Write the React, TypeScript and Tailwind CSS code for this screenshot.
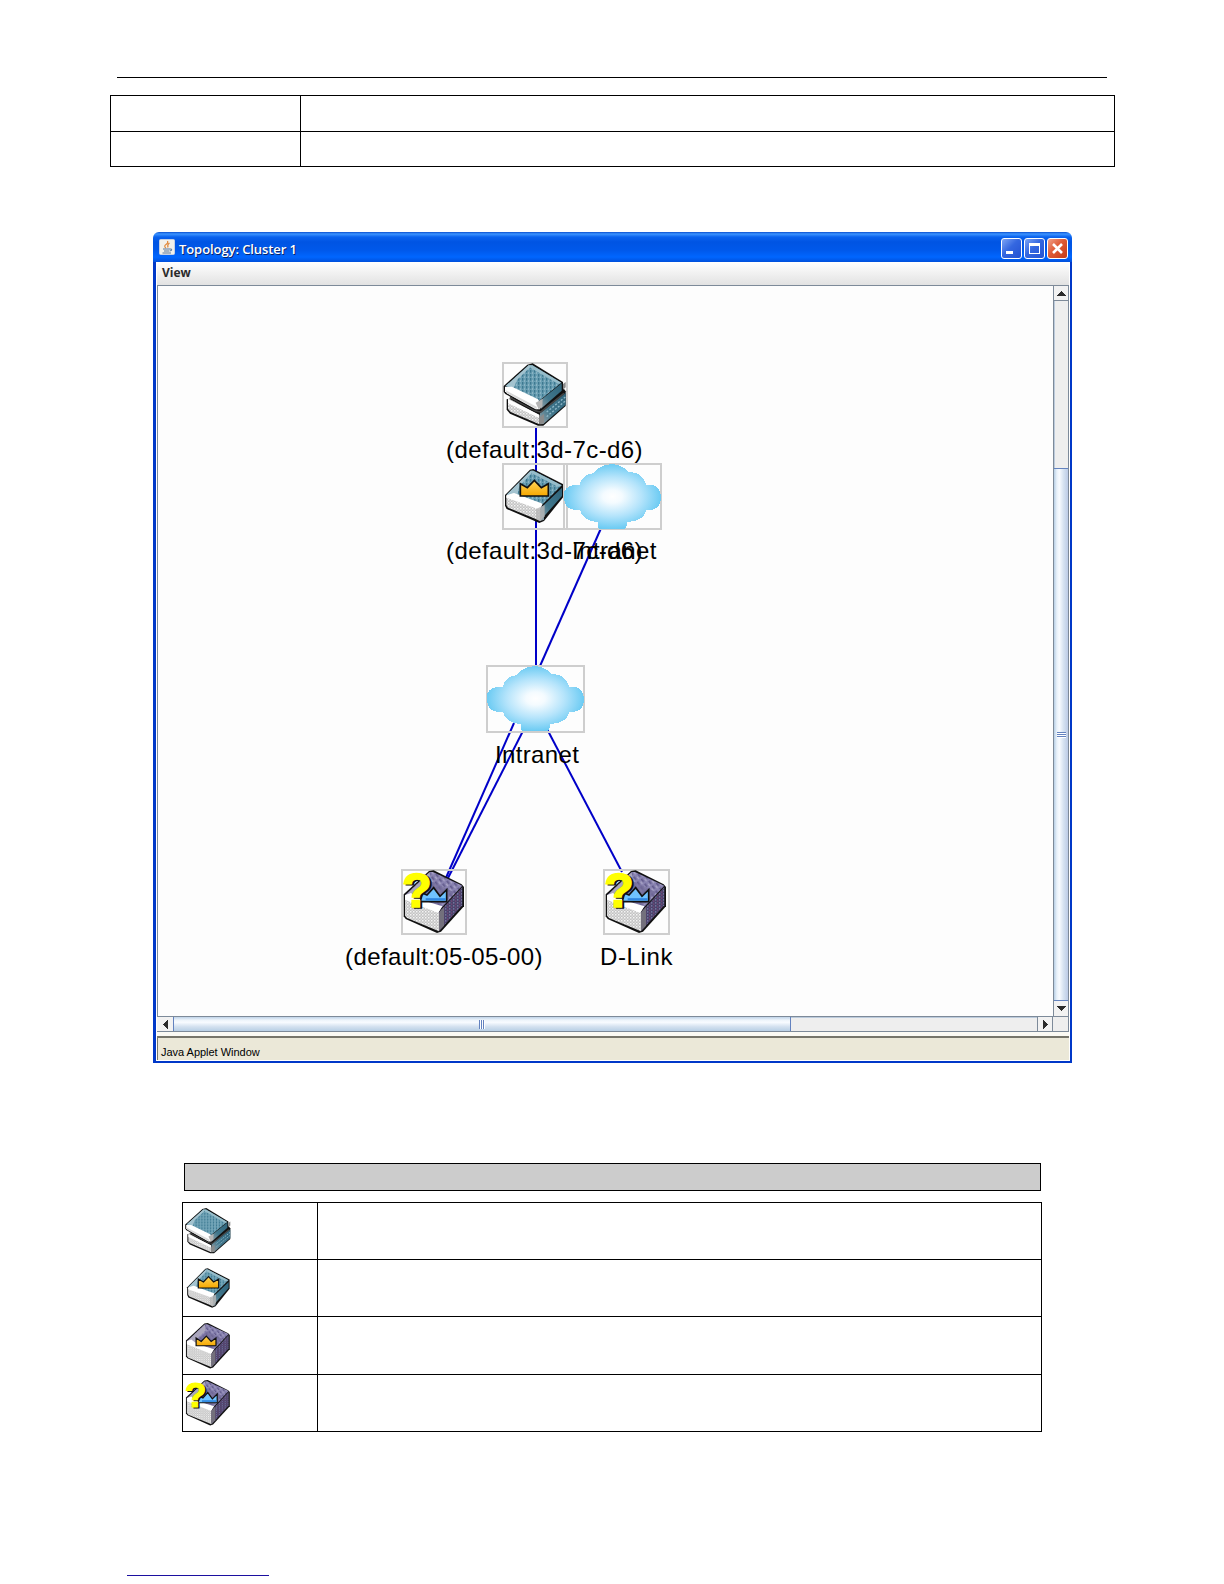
import React from 'react';

const LINKS = [
  [536, 428, 536, 666],
  [602, 526, 540, 666],
  [514, 723, 445, 880],
  [524, 729, 447, 880],
  [547, 729, 622, 872],
];

const LABELS = [
  { text: '(default:3d-7c-d6)', x: 446, y: 436, cls: 'tracking-[0.42px]' },
  { text: '(default:3d-7c-d6)', x: 446, y: 537, cls: 'tracking-[0.42px]' },
  { text: 'Intranet', x: 572, y: 537, cls: 'tracking-[0.45px]' },
  { text: 'Intranet', x: 495, y: 741, cls: 'tracking-[0.35px]' },
  { text: '(default:05-05-00)', x: 345, y: 943, cls: 'tracking-[0.4px]' },
  { text: 'D-Link', x: 600, y: 943, cls: 'tracking-[0.65px]' },
];

// canvas origin inside the page, so nodes can use page coordinates
const OX = 158;
const OY = 286;

function Defs() {
  return (
    <svg width="0" height="0" className="absolute">
      <defs>
        <pattern id="dots" width="9" height="9" patternUnits="userSpaceOnUse">
          <rect width="9" height="9" fill="#c2c2c2" />
          <rect width="4.5" height="4.5" fill="#f4f4f4" />
          <rect x="4.5" y="4.5" width="4.5" height="4.5" fill="#dcdcdc" />
        </pattern>
        <pattern id="tealWeave" width="12" height="12" patternUnits="userSpaceOnUse">
          <rect width="12" height="12" fill="#6a9fb3" />
          <rect width="4" height="8" fill="#3d7890" />
          <rect x="6" y="6" width="3" height="6" fill="#8bb4c4" />
        </pattern>
        <pattern id="purpleWeave" width="15" height="18" patternUnits="userSpaceOnUse" patternTransform="rotate(-35)">
          <rect width="15" height="18" fill="#8882b0" />
          <rect width="5" height="11" fill="#625b8c" />
          <rect x="9" y="6" width="4" height="9" fill="#aaa5c6" />
        </pattern>
        <pattern id="purpleSide" width="12" height="9" patternUnits="userSpaceOnUse">
          <rect width="12" height="9" fill="#48446b" />
          <rect width="4" height="5" fill="#75709d" />
          <rect x="6" y="4" width="4" height="5" fill="#704575" />
        </pattern>
        <linearGradient id="tealSide" x1="0" y1="1" x2="1" y2="0">
          <stop offset="0" stopColor="#9aa3a8" />
          <stop offset="0.4" stopColor="#41778c" />
          <stop offset="1" stopColor="#2e637a" />
        </linearGradient>
        <linearGradient id="gold" x1="0" y1="0" x2="0" y2="1">
          <stop offset="0" stopColor="#ffd45a" />
          <stop offset="1" stopColor="#f5a800" />
        </linearGradient>
        <radialGradient id="cloud" cx="0.5" cy="0.5" r="0.5">
          <stop offset="0" stopColor="#ffffff" />
          <stop offset="0.2" stopColor="#f4fbff" />
          <stop offset="0.6" stopColor="#b5e4fb" />
          <stop offset="1" stopColor="#6ccbf3" />
        </radialGradient>
      </defs>
    </svg>
  );
}

function StackArt() {
  return (
    <g>
      <path d="M14 112V143L24 155L108 191H124L191 132V88L178 70Z" fill="#111" />
      <path d="M18 108L112 160V187L26 150L18 141Z" fill="url(#dots)" />
      <path d="M18 112L112 158V168L18 124Z" fill="#fff" />
      <path d="M114 154L191 92V128L124 186L114 187Z" fill="url(#tealSide)" />
      <path d="M134 150L191 104M134 164L191 116" stroke="#8fb8c8" strokeWidth="4" strokeDasharray="6 5" />
      <path d="M110 168L126 156V184L112 187Z" fill="#8b8b8b" />
      <path d="M24 106L100 146L116 150L186 94" fill="none" stroke="#444" strokeWidth="5" />
      <path d="M5 72L76 8L92 4L183 60V88L170 101L116 146L98 144L10 96L5 90Z" fill="#111" />
      <path d="M11 72L80 10H91L178 62L108 119Z" fill="url(#tealWeave)" />
      <path d="M11 72L80 10L86 14L44 55L36 77Z" fill="#a3c3cf" />
      <path d="M80 10H91L178 62L170 66L86 18Z" fill="#97bdca" />
      <path d="M9 74L30 74L108 112L114 122V142H101L15 94L9 88Z" fill="#fff" />
      <path d="M10 84L104 134V142L15 94Z" fill="#d8d8d8" />
      <path d="M112 118L179 64V86L116 141Z" fill="url(#tealSide)" />
      <path d="M101 122L122 110L121 134L110 142Z" fill="#b5b5b5" />
      <path d="M183 66L191 60V76L183 83Z" fill="#8a8a8a" />
    </g>
  );
}

function SwitchArt() {
  return (
    <g>
      <path d="M9 96L84 20L94 18L184 64V102L126 174L112 180L14 138L9 128Z" fill="#111" />
      <path d="M14 96L86 23H94L179 67L122 124Z" fill="url(#tealWeave)" />
      <path d="M14 95L86 23L90 29L52 70L46 96L30 98Z" fill="#a3c3cf" />
      <path d="M86 23H94L179 67L168 71L90 31Z" fill="#97bdca" />
      <path d="M13 98L32 92L112 128L116 142V174L18 134L13 126Z" fill="url(#dots)" />
      <path d="M13 97L36 90L122 122L114 140L13 104Z" fill="#fff" />
      <path d="M117 134L180 74V99L126 160V170L114 174Z" fill="url(#tealSide)" />
      <path d="M102 138L128 126V160L114 175L102 168Z" fill="#b6b6b6" fillOpacity="0.8" />
      <path d="M55 62L76 74L97 52L118 74L139 62V99H55Z" fill="url(#gold)" stroke="#111" strokeWidth="5" />
    </g>
  );
}

function HubArt() {
  return (
    <g>
      <path d="M8 76L84 6L98 4L182 46L189 54V112L120 188L108 192L14 150L8 142Z" fill="#111" />
      <path d="M13 78L86 9H96L184 50L116 122Z" fill="url(#purpleWeave)" />
      <path d="M13 80L86 10L89 36L52 70V98Z" fill="#aaa6bd" />
      <path d="M52 78L94 38L160 70L116 112Z" fill="#726b98" fillOpacity="0.7" />
      <path d="M12 78L28 74L110 116L114 124V187L18 147L12 140Z" fill="url(#dots)" />
      <path d="M12 79L30 72L52 90L124 112L112 132L12 92Z" fill="#fff" />
      <path d="M114 130L184 54V109L117 183L114 185Z" fill="url(#purpleSide)" />
      <path d="M114 130L129 114V170L114 186Z" fill="#73707c" />
    </g>
  );
}

function CrownHubArt() {
  return (
    <g>
      <HubArt />
      <path d="M50 66L71 80L92 58L112 80L132 66V98H50Z" fill="url(#gold)" stroke="#111" strokeWidth="5" />
    </g>
  );
}

function UnknownHubArt() {
  return (
    <g>
      <HubArt />
      <path d="M64 72L78 78L98 56L117 82L137 62V98H58Z" fill="#6fc3ff" stroke="#111" strokeWidth="5" />
      <path d="M74 91H134" stroke="#2f86e0" strokeWidth="7" />
      <g fontFamily="Liberation Sans, Arial, sans-serif" fontWeight="bold" fontSize="144" strokeWidth="5">
        <text x="10" y="118" fill="#111" stroke="#111">?</text>
        <text x="4" y="114" fill="#ffff00" stroke="#ffff00">?</text>
      </g>
    </g>
  );
}

function Icon({ size, className = '', children }: { size: number; className?: string; children: React.ReactNode }) {
  return (
    <svg width={size} height={size} viewBox="0 0 198 198" className={`block shrink-0 overflow-visible ${className}`}>
      {children}
    </svg>
  );
}

function Cloud() {
  return (
    <svg width="99" height="67" viewBox="0 0 99 67" className="block" shapeRendering="crispEdges">
      <path
        d="M1 29Q4 22 13 22L17 22Q18 12 31 10Q36 2 49 1Q60 2 65 9Q80 9 83 22Q97 20 98 34Q98 48 83 47Q81 58 64 59Q64 66 61 66H37Q34 66 35 59Q20 58 17 47Q1 48 1 34Z"
        fill="url(#cloud)"
      />
    </svg>
  );
}

const NODES = [
  { x: 502, y: 362, w: 'w-[66px]', h: 'h-[66px]', art: <Icon size={66}><StackArt /></Icon> },
  { x: 502, y: 463, w: 'w-[66px]', h: 'h-[67px]', art: <Icon size={66}><SwitchArt /></Icon> },
  { x: 563, y: 463, w: 'w-[99px]', h: 'h-[67px]', art: <Cloud /> },
  { x: 486, y: 665, w: 'w-[99px]', h: 'h-[68px]', art: <Cloud /> },
  { x: 401, y: 869, w: 'w-[66px]', h: 'h-[66px]', art: <Icon size={66}><UnknownHubArt /></Icon> },
  { x: 603, y: 869, w: 'w-[67px]', h: 'h-[66px]', art: <Icon size={66}><UnknownHubArt /></Icon> },
];

function Topology() {
  return (
    <div className="relative flex-1 overflow-hidden bg-[#fdfdfd]">
      <svg width="895" height="730" viewBox={`${OX} ${OY} 895 730`} className="absolute left-0 top-0">
        {LINKS.map(([x1, y1, x2, y2], i) => (
          <line key={i} x1={x1} y1={y1} x2={x2} y2={y2} stroke="#0000c8" strokeWidth="2" />
        ))}
      </svg>
      {NODES.map((n, i) => (
        <div key={i} className={`absolute ${n.w} ${n.h}`} style={{ left: n.x - OX, top: n.y - OY }}>
          <div className="absolute inset-0 border-2 border-[#cecece]" />
          <div className="relative">{n.art}</div>
        </div>
      ))}
      {LABELS.map((l, i) => (
        <div
          key={i}
          className={`absolute whitespace-nowrap text-[24px] leading-[27px] text-black ${l.cls}`}
          style={{ left: l.x - OX, top: l.y - OY }}
        >
          {l.text}
        </div>
      ))}
    </div>
  );
}

function TitleBar() {
  return (
    <div className="flex h-[30px] shrink-0 items-center rounded-t-[6px] bg-[linear-gradient(#0a4fd0_0px,#3c94ff_2px,#0a62ee_5px,#0054e3_10px,#0058ea_18px,#0066ff_25px,#0050dc_30px)] pl-[6px] pr-[4px]">
      <svg width="16" height="16" viewBox="0 0 16 16" className="mr-[4px]">
        <rect x="0.5" y="0.5" width="15" height="15" rx="1" fill="#f2f0ea" stroke="#c4d0e4" />
        <path d="M8.5 2Q9.5 4 7 5.5T7 9M10.5 4Q8 5.5 9 8.5" fill="none" stroke="#e0893c" strokeWidth="1.2" />
        <path d="M4 10H11M5 12H10M3.5 14H12M11 10Q13.5 9.5 12.5 11.5L10.5 12" fill="none" stroke="#58779a" strokeWidth="1" />
      </svg>
      <span className="mt-[5px] flex-1 whitespace-nowrap font-['Open_Sans','Noto_Sans',sans-serif] text-[13px] font-semibold tracking-[-0.08px] text-white [text-shadow:1px_1px_0_#0a246a]">
        Topology: Cluster 1
      </span>
      <div className="mt-[2px] flex gap-[2px]">
        <div className="h-[21px] w-[21px] rounded-[3px] border border-white bg-[linear-gradient(135deg,#7da5f5,#3467e0_45%,#2452d2)]">
          <svg width="19" height="19">
            <rect x="4" y="12" width="7" height="3" fill="#fff" />
          </svg>
        </div>
        <div className="h-[21px] w-[21px] rounded-[3px] border border-white bg-[linear-gradient(135deg,#7da5f5,#3467e0_45%,#2452d2)]">
          <svg width="19" height="19" shapeRendering="crispEdges">
            <path d="M4 4H15V15H4ZM5 7V14H14V7Z" fill="#fff" fillRule="evenodd" />
          </svg>
        </div>
        <div className="h-[21px] w-[21px] rounded-[3px] border border-white bg-[linear-gradient(135deg,#f0a088,#df5a35_45%,#c63c16)]">
          <svg width="19" height="19">
            <path d="M5 5L14 14M14 5L5 14" stroke="#fff" strokeWidth="2.6" />
          </svg>
        </div>
      </div>
    </div>
  );
}

function VScroll() {
  return (
    <div className="flex w-[16px] shrink-0 flex-col border-x border-[#7d8a99] bg-[#eeeeee]">
      <div className="flex h-[15px] items-center justify-center border-b border-[#7d8a99] bg-[#f2f2f2]">
        <svg width="9" height="5" shapeRendering="crispEdges"><path d="M4.5 0L9 5H0Z" fill="#2b2b2b" /></svg>
      </div>
      <div className="h-[167px] border-l border-[#bccbdc]" />
      <div className="flex flex-1 items-center justify-center border-y border-[#6382bf] bg-[linear-gradient(90deg,#b8cfe5,#e8f1fa_20%,#f8fbff_38%,#d5e2f1_68%,#bccbe6)]">
        <div className="h-[6px] w-[9px] bg-[repeating-linear-gradient(#6382bf_0px,#6382bf_1px,#ffffff_1px,#ffffff_2px)]" />
      </div>
      <div className="flex h-[15px] items-center justify-center bg-[#f2f2f2]">
        <svg width="9" height="5" shapeRendering="crispEdges"><path d="M0 0H9L4.5 5Z" fill="#2b2b2b" /></svg>
      </div>
    </div>
  );
}

function HScroll() {
  return (
    <div className="flex h-[16px] shrink-0 border-y border-[#7d8a99] bg-[#eeeeee]">
      <div className="flex w-[16px] items-center justify-center bg-[#f2f2f2]">
        <svg width="5" height="9" shapeRendering="crispEdges"><path d="M5 0V9L0 4.5Z" fill="#2b2b2b" /></svg>
      </div>
      <div className="flex w-[618px] items-center justify-center border-x border-[#6382bf] bg-[linear-gradient(#c0d4e9,#edf4fb_22%,#f8fbff_38%,#d2e0ef_70%,#b8cfe5)]">
        <div className="h-[9px] w-[6px] bg-[repeating-linear-gradient(90deg,#6382bf_0px,#6382bf_1px,#ffffff_1px,#ffffff_2px)]" />
      </div>
      <div className="flex-1 border-t border-[#bccbdc]" />
      <div className="flex w-[16px] items-center justify-center border-x border-[#7d8a99] bg-[#f2f2f2]">
        <svg width="5" height="9" shapeRendering="crispEdges"><path d="M0 0V9L5 4.5Z" fill="#2b2b2b" /></svg>
      </div>
      <div className="w-[16px] border-r border-[#7d8a99]" />
    </div>
  );
}

function AppletWindow() {
  return (
    <div className="ml-[153px] mt-[65px] flex h-[831px] w-[919px] flex-col">
      <TitleBar />
      <div className="flex min-h-0 flex-1 flex-col border-b-2 border-l-[3px] border-r-2 border-[#0038c8] pl-px pr-px">
        <div className="flex h-[23px] shrink-0 items-center bg-[linear-gradient(#ffffff,#e2e2e2)] pl-[5px] font-['Open_Sans','Noto_Sans',sans-serif] text-[12px] font-bold text-[#2b2b2b]">
          <span className="-mt-px">View</span>
        </div>
        <div className="flex min-h-0 flex-1 border-l border-t border-[#7d8a99]">
          <Topology />
          <VScroll />
        </div>
        <HScroll />
        <div className="h-[4px] shrink-0 bg-[#fbfaf4]" />
        <div className="mb-px flex h-[24px] shrink-0 items-center border-l border-t-2 border-[#76756a] bg-[#ebe8d8] pl-[3px] pt-[6px] font-['Liberation_Sans',Arial,sans-serif] text-[11px] tracking-[-0.02px] text-black">
          Java Applet Window
        </div>
      </div>
    </div>
  );
}

const LEGEND = [
  { h: 'h-[57px]', pad: 'pl-px pt-[4px]', art: <StackArt /> },
  { h: 'h-[57px]', pad: 'pl-[2px] pt-[4px]', art: <SwitchArt /> },
  { h: 'h-[58px]', pad: 'pl-px pt-[5px]', art: <CrownHubArt /> },
  { h: 'h-[57px]', pad: 'pl-px pt-[4px]', art: <UnknownHubArt /> },
];

export default function App() {
  return (
    <div className="h-[1584px] w-[1224px] overflow-hidden bg-white font-['Liberation_Sans',Arial,sans-serif]">
      <Defs />
      <div className="ml-[117px] mt-[77px] h-px w-[990px] bg-black" />
      <div className="ml-[110px] mt-[17px] w-[1005px] border border-b-0 border-black">
        <div className="flex h-[36px] border-b border-black">
          <div className="w-[190px] border-r border-black" />
        </div>
        <div className="flex h-[35px] border-b border-black">
          <div className="w-[190px] border-r border-black" />
        </div>
      </div>
      <AppletWindow />
      <div className="ml-[184px] mt-[100px] h-[28px] w-[857px] border border-black bg-[#cccccc]" />
      <div className="ml-[182px] mt-[11px] w-[860px] border border-b-0 border-black">
        {LEGEND.map((row, i) => (
          <div key={i} className={`flex border-b border-black ${row.h}`}>
            <div className={`w-[135px] border-r border-black ${row.pad}`}>
              <Icon size={48}>{row.art}</Icon>
            </div>
          </div>
        ))}
      </div>
      <div className="ml-[127px] mt-[143px] h-px w-[142px] bg-[#1c10a0]" />
    </div>
  );
}
